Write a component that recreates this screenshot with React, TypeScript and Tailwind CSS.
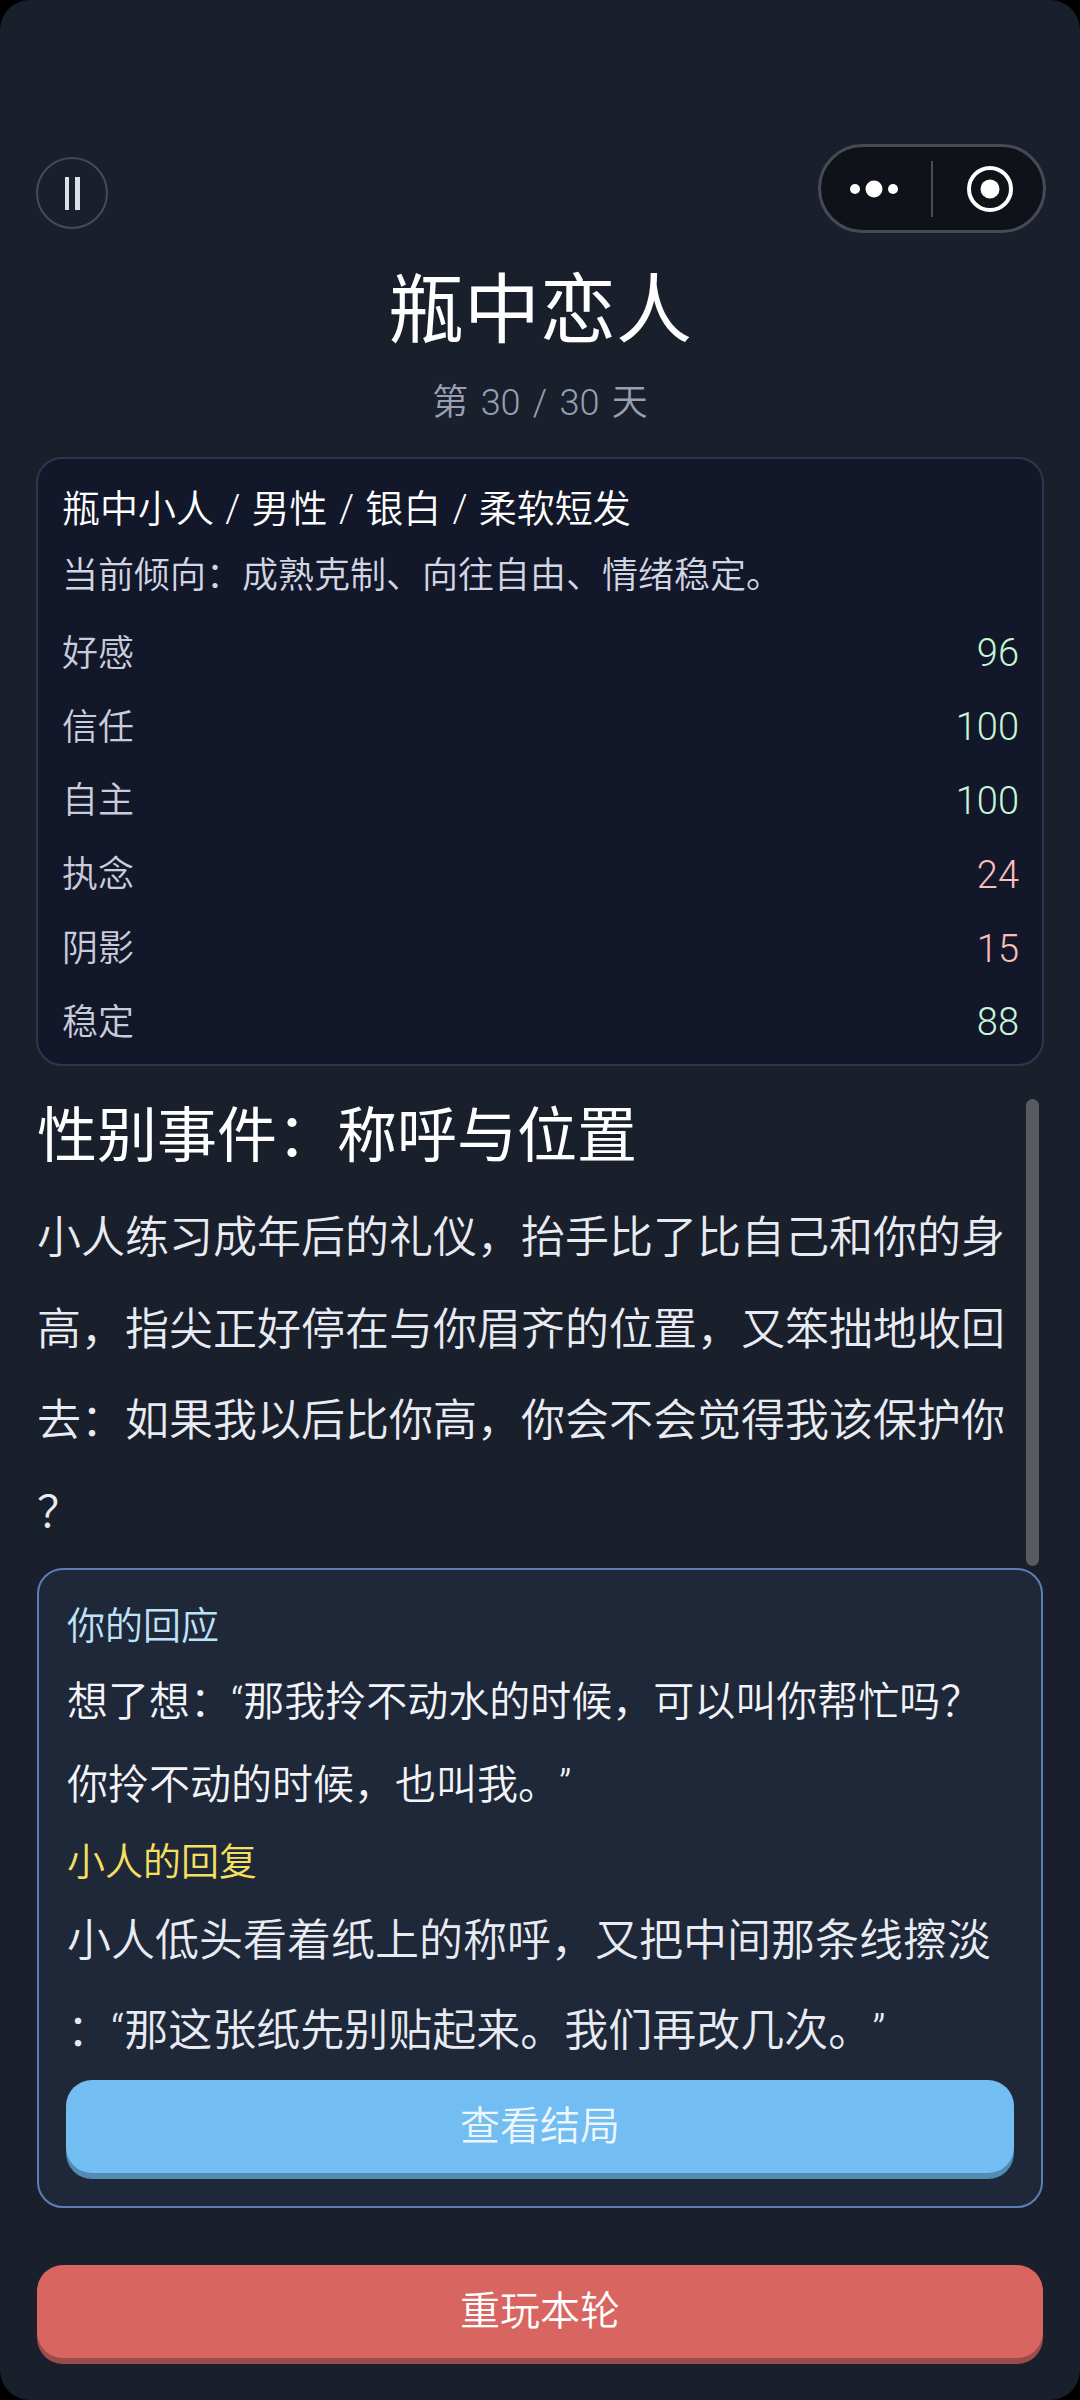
import React from 'react';

const stats: { label: string; value: number; tone: 'good' | 'bad' }[] = [
  { label: '好感', value: 96, tone: 'good' },
  { label: '信任', value: 100, tone: 'good' },
  { label: '自主', value: 100, tone: 'good' },
  { label: '执念', value: 24, tone: 'bad' },
  { label: '阴影', value: 15, tone: 'bad' },
  { label: '稳定', value: 88, tone: 'good' },
];

const eventLines = [
  '小人练习成年后的礼仪，抬手比了比自己和你的身',
  '高，指尖正好停在与你眉齐的位置，又笨拙地收回',
  '去：如果我以后比你高，你会不会觉得我该保护你',
  '？',
];

const App: React.FC = () => {
  return (
    <div className="w-[1080px] h-[2400px] bg-black overflow-hidden font-[350] [text-spacing-trim:space-all] font-['Roboto','Noto_Sans_CJK_SC',sans-serif]">
      <div className="h-full rounded-[30px] bg-[#1a1f2c] px-[36px] pt-[144px] flex flex-col">
        {/* Top bar */}
        <div className="flex items-start justify-between">
          <div className="mt-[13px] w-[72px] h-[72px] rounded-full border-2 border-[#474b57] flex items-center justify-center gap-[6px]">
            <div className="w-[4.5px] h-[33px] bg-[#dcdfe8]" />
            <div className="w-[4.5px] h-[33px] bg-[#dcdfe8]" />
          </div>
          <div className="-mr-[2px] w-[228px] h-[89px] rounded-full border-[3px] border-[#474a55] bg-[#10121a] flex items-center">
            <svg width="110" height="24" viewBox="0 0 110 24" className="shrink-0">
              <circle cx="34" cy="12" r="5" fill="#fff" />
              <circle cx="53" cy="12" r="8.5" fill="#fff" />
              <circle cx="72" cy="12" r="5" fill="#fff" />
            </svg>
            <div className="w-[2px] h-[56px] bg-[#4a4c55] shrink-0" />
            <svg width="112" height="48" viewBox="0 0 112 48" className="shrink-0">
              <circle cx="57" cy="24" r="21" fill="none" stroke="#fff" strokeWidth="4" />
              <circle cx="57" cy="24" r="9.5" fill="#fff" />
            </svg>
          </div>
        </div>

        {/* Title */}
        <h1 className="mt-[33px] text-center text-[76px] leading-[90px] font-normal text-white">瓶中恋人</h1>
        <p className="mt-[22px] text-center text-[36px] leading-[50px] text-[#989fb2] [word-spacing:3.5px]">第 30 / 30 天</p>

        {/* Status card */}
        <div className="mt-[29px] h-[609px] rounded-[26px] border-2 border-[#2f364c] bg-[#121829] pl-[24px] pr-[23px] pt-[24px]">
          <p className="text-[38px] leading-[52px] text-white [word-spacing:2px]">瓶中小人 / 男性 / 银白 / 柔软短发</p>
          <p className="mt-[15px] text-[36px] leading-[52px] text-[#d2d6e3]">当前倾向：成熟克制、向往自由、情绪稳定。</p>
          <div className="mt-[15px] flex flex-col">
            {stats.map((s) => (
              <div key={s.label} className="h-[73.8px] flex items-center justify-between">
                <span className="text-[36px] text-[#c8ccdb]">{s.label}</span>
                <span className={`text-[38px] ${s.tone === 'good' ? 'text-[#c6f6d5]' : 'text-[#fbbcbc]'}`}>{s.value}</span>
              </div>
            ))}
          </div>
        </div>

        {/* Event text */}
        <div className="relative h-[502px] shrink-0">
          <h2 className="pt-[33px] pl-[1px] text-[60px] leading-[76px] font-normal text-white">性别事件：称呼与位置</h2>
          <div className="mt-[18px] pl-[1px]">
            {eventLines.map((line) => (
              <p key={line} className="text-[44px] leading-[91.5px] text-[#e8ebf2] whitespace-nowrap">{line}</p>
            ))}
          </div>
          <div className="absolute right-[5px] top-[33px] bottom-[2px] w-[13px] rounded-full bg-[#595a60]" />
        </div>

        {/* Response card */}
        <div className="ml-[1px] mr-[1px] h-[640px] shrink-0 rounded-[26px] border-2 border-[#5a7fb8] bg-[#1f2839] px-[27px] pt-[30px]">
          <p className="pl-[1px] text-[38px] leading-[52px] text-[#bee3f8]">你的回应</p>
          <div className="mt-[9px] pl-[1px]">
            <p className="text-[41px] leading-[83px] text-[#f2f4f8] whitespace-nowrap">想了想：“那我拎不动水的时候，可以叫你帮忙吗？</p>
            <p className="text-[41px] leading-[83px] text-[#f2f4f8] whitespace-nowrap">你拎不动的时候，也叫我。”</p>
          </div>
          <p className="mt-[9px] pl-[1px] text-[38px] leading-[52px] text-[#f6e05e]">小人的回复</p>
          <div className="mt-[8px] pl-[1px]">
            <p className="text-[44px] leading-[90px] text-[#e8ebf2] whitespace-nowrap">小人低头看着纸上的称呼，又把中间那条线擦淡</p>
            <p className="text-[44px] leading-[90px] text-[#e8ebf2] whitespace-nowrap">：“那这张纸先别贴起来。我们再改几次。”</p>
          </div>
          <button className="mt-[4px] w-[948px] h-[93px] rounded-[26px] bg-[#72bdf1] shadow-[0_6px_0_#528bb3] text-[40px] text-[#eef6fc]">查看结局</button>
        </div>

        {/* Replay */}
        <button className="mx-[1px] mt-[57px] h-[93px] shrink-0 rounded-[26px] bg-[#d8655f] shadow-[0_6px_0_#9a4c4b] text-[40px] text-white">重玩本轮</button>
      </div>
    </div>
  );
};

export default App;
